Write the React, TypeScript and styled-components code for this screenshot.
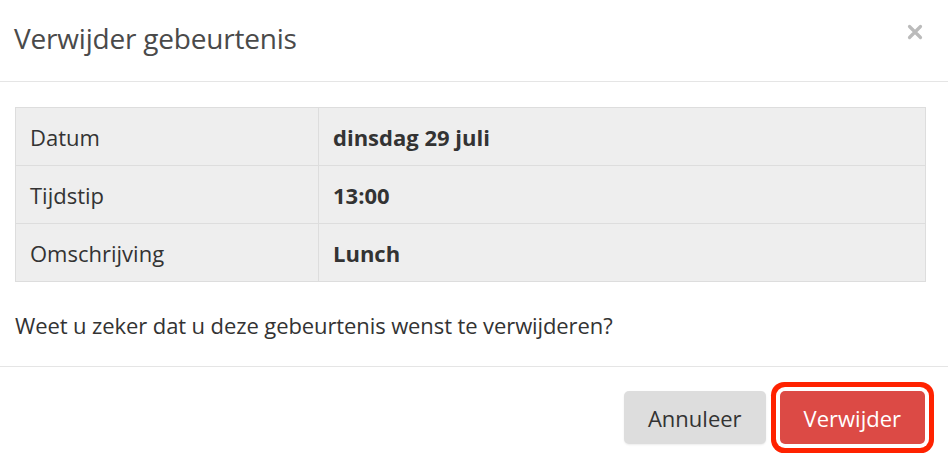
import styled, { createGlobalStyle } from "styled-components";

const GlobalStyle = createGlobalStyle`
    html, body {
        margin: 0;
        padding: 0;
        background: #ffffff;
    }
    body {
        font-family: "Open Sans", "Liberation Sans", sans-serif;
        color: #333333;
    }
`

const ModalStyle = styled.div`
    width: 948px;
    height: 466px;
    display: flex;
    flex-direction: column;
    box-sizing: border-box;
`

const HeaderStyle = styled.div`
    height: 82px;
    box-sizing: border-box;
    padding: 0 24px 6px 14px;
    display: flex;
    align-items: center;
    justify-content: space-between;
    border-bottom: 1px solid #e5e5e5;
`

const TitleStyle = styled.h4`
    margin: 0;
    font-size: 28px;
    font-weight: 400;
    color: #4a4a4a;
    letter-spacing: -0.2px;
`

const CloseStyle = styled.button`
    border: none;
    background: none;
    padding: 0;
    width: 18px;
    height: 18px;
    margin-top: -12px;
    cursor: pointer;
    display: flex;
    align-items: center;
    justify-content: center;
`

const BodyStyle = styled.div`
    padding: 25px 22px 0 15px;
    height: 285px;
    box-sizing: border-box;
    border-bottom: 1px solid #e5e5e5;
`

const TableStyle = styled.table`
    width: 100%;
    border-collapse: collapse;
    background: #eeeeee;
    font-size: 22px;
`

const CellStyle = styled.td<{$bold?: boolean}>`
    border: 1px solid #dddddd;
    height: 58px;
    box-sizing: border-box;
    padding: 0 14px;
    font-weight: ${(props) => props.$bold ? 700 : 400};
    width: ${(props) => props.$bold ? "auto" : "303px"};
    vertical-align: middle;
`

const QuestionStyle = styled.p`
    margin: 28px 0 0 0;
    font-size: 22px;
    letter-spacing: -0.1px;
`

const FooterStyle = styled.div`
    flex: 1;
    display: flex;
    justify-content: flex-end;
    align-items: flex-start;
    gap: 14px;
    padding: 24px 23px 0 0;
`

const ButtonStyle = styled.button<{$danger?: boolean}>`
    height: 53px;
    padding: 0 24px;
    border: none;
    border-radius: 5px;
    font-family: "Open Sans", "Liberation Sans", sans-serif;
    font-size: 22px;
    background: ${(props) => props.$danger ? "#dc4a45" : "#dddddd"};
    color: ${(props) => props.$danger ? "#ffffff" : "#333333"};
    box-shadow: ${(props) => props.$danger
        ? "0 0 0 4px #ffffff, 0 0 0 9px #ff2200"
        : "0 1px 2px rgba(0, 0, 0, 0.08)"};
    cursor: pointer;
`

const rows = [
    {label: "Datum", value: "dinsdag 29 juli"},
    {label: "Tijdstip", value: "13:00"},
    {label: "Omschrijving", value: "Lunch"},
];

export default function App() {
    return (
        <>
            <GlobalStyle/>
            <ModalStyle>
                <HeaderStyle>
                    <TitleStyle>Verwijder gebeurtenis</TitleStyle>
                    <CloseStyle aria-label="Sluiten">
                        <svg width="16" height="16" viewBox="0 0 16 16">
                            <path d="M2.5 2.5 L13.5 13.5 M13.5 2.5 L2.5 13.5" stroke="#bbbbbb" strokeWidth="3.2" strokeLinecap="round"/>
                        </svg>
                    </CloseStyle>
                </HeaderStyle>
                <BodyStyle>
                    <TableStyle>
                        <tbody>
                            {rows.map((row) => (
                                <tr key={row.label}>
                                    <CellStyle>{row.label}</CellStyle>
                                    <CellStyle $bold>{row.value}</CellStyle>
                                </tr>
                            ))}
                        </tbody>
                    </TableStyle>
                    <QuestionStyle>Weet u zeker dat u deze gebeurtenis wenst te verwijderen?</QuestionStyle>
                </BodyStyle>
                <FooterStyle>
                    <ButtonStyle>Annuleer</ButtonStyle>
                    <ButtonStyle $danger>Verwijder</ButtonStyle>
                </FooterStyle>
            </ModalStyle>
        </>
    );
}
